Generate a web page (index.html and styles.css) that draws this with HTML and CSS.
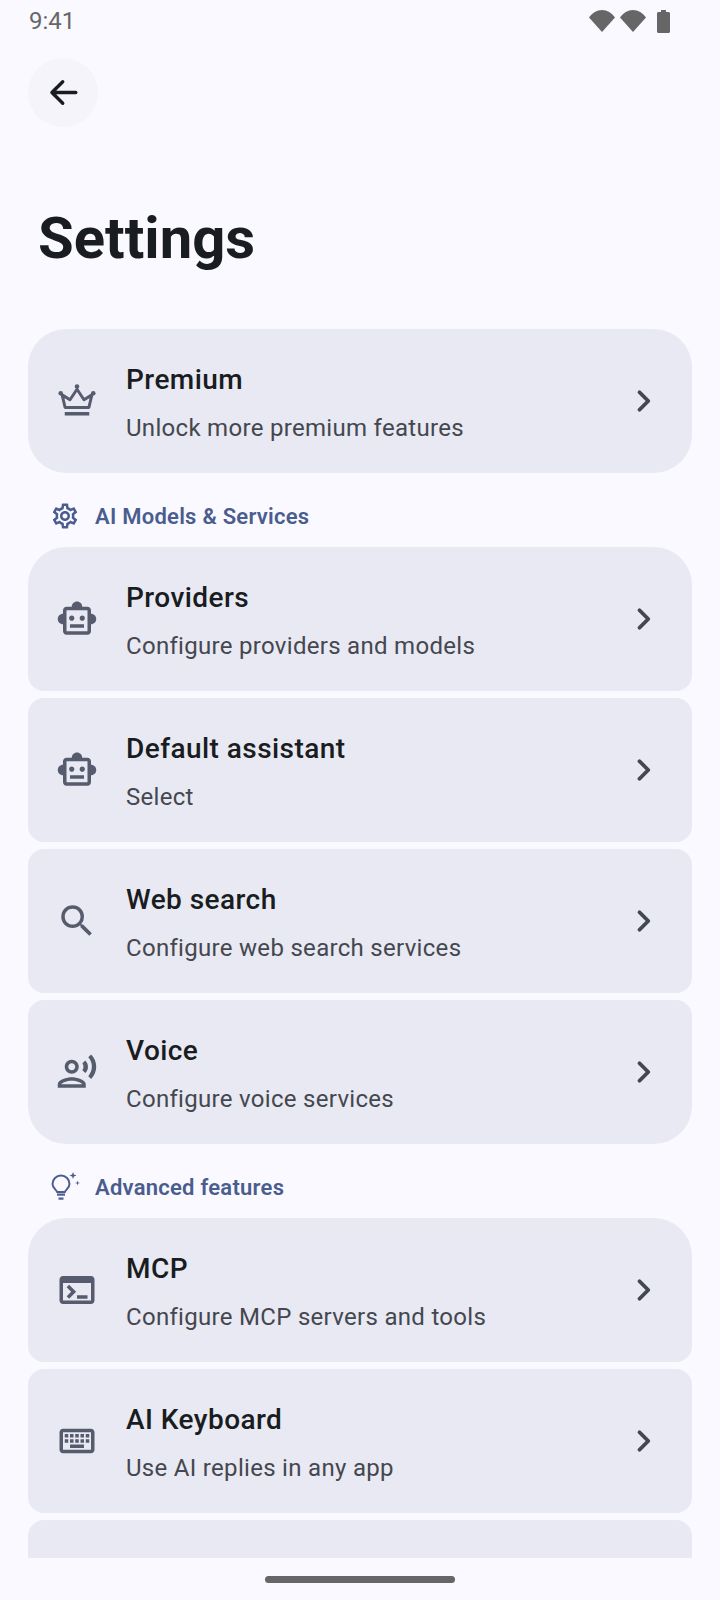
FILE: index.html
```html
<!DOCTYPE html>
<html lang="en">
<head>
<meta charset="utf-8">
<title>Settings</title>
<link rel="stylesheet" href="styles.css">
</head>
<body>
<div class="app">
  <div class="status">
    <span class="time">9:41</span>
    <div class="status-icons">
      <svg class="wifi" viewBox="0 0 26 22"><path d="M0 7.5C3 3 8 0 13 0s10 3 13 7.5L13 22z"/></svg>
      <svg class="wifi" viewBox="0 0 26 22"><path d="M0 7.5C3 3 8 0 13 0s10 3 13 7.5L13 22z"/></svg>
      <svg class="battery" viewBox="0 0 13 23"><path d="M4 0h5v2h2.500c.8 0 1.500.7 1.500 1.500V21.500c0 .8-.7 1.500-1.500 1.500h-10C.7 23 0 22.300 0 21.500V3.500C0 2.700.7 2 1.500 2H4z"/></svg>
    </div>
  </div>
  <div class="topbar">
    <button class="back" aria-label="Back">
      <svg viewBox="0 0 24 24"><path d="M20 12H5M11.500 5 4.500 12l7 7"/></svg>
    </button>
  </div>
  <h1 class="title">Settings</h1>
  <main class="list">
    <a class="card solo">
      <svg class="icon" viewBox="0 0 24 24"><path class="line" d="M5.200 15.700 3.500 8.500 8 11.300 12 5.300l4 6 4.500-2.800-1.700 7.200z"/><circle cx="2.700" cy="7.600" r="1.300"/><circle cx="12" cy="3.700" r="1.300"/><circle cx="21.300" cy="7.600" r="1.300"/><rect x="5" y="18.300" width="14" height="2"/></svg>
      <div class="text"><div class="name">Premium</div><div class="desc">Unlock more premium features</div></div>
      <svg class="chev" viewBox="0 0 24 24"><path d="m10 7 5 5-5 5"/></svg>
    </a>

    <div class="section">
      <svg class="sec-icon" viewBox="0 0 24 24"><path d="M19.430 12.980c.04-.32.07-.64.07-.98 0-.34-.03-.66-.07-.98l2.110-1.650c.19-.15.24-.42.12-.64l-2-3.460c-.09-.16-.26-.25-.44-.25-.06 0-.12.01-.17.03l-2.490 1c-.52-.4-1.080-.73-1.690-.98l-.38-2.650C14.460 2.180 14.250 2 14 2h-4c-.25 0-.46.18-.49.42l-.38 2.650c-.61.25-1.170.59-1.690.98l-2.490-1c-.06-.02-.12-.03-.18-.03-.17 0-.34.09-.43.25l-2 3.460c-.13.22-.07.49.12.64l2.110 1.650c-.04.32-.07.65-.07.98 0 .33.03.66.07.98l-2.110 1.650c-.19.15-.24.42-.12.64l2 3.460c.09.16.26.25.44.25.06 0 .12-.01.17-.03l2.490-1c.52.4 1.080.73 1.690.98l.38 2.650c.03.24.24.42.49.42h4c.25 0 .46-.18.49-.42l.38-2.650c.61-.25 1.170-.59 1.690-.98l2.490 1c.06.02.12.03.18.03.17 0 .34-.09.43-.25l2-3.460c.12-.22.07-.49-.12-.64l-2.110-1.650zm-1.980-1.710c.04.31.05.52.05.73 0 .21-.02.43-.05.73l-.14 1.130.89.7 1.080.84-.7 1.210-1.270-.51-1.040-.42-.9.68c-.43.32-.84.56-1.250.73l-1.060.43-.16 1.130-.2 1.350h-1.400l-.19-1.350-.16-1.130-1.060-.43c-.43-.18-.83-.41-1.230-.71l-.91-.7-1.060.43-1.270.51-.7-1.210 1.080-.84.89-.7-.14-1.130c-.03-.31-.05-.54-.05-.74s.02-.43.05-.73l.14-1.130-.89-.7-1.080-.84.7-1.210 1.270.51 1.040.42.9-.68c.43-.32.84-.56 1.250-.73l1.060-.43.16-1.130.2-1.350h1.390l.19 1.350.16 1.130 1.060.43c.43.18.83.41 1.230.71l.91.7 1.060-.43 1.270-.51.7 1.210-1.070.85-.89.7.14 1.130zM12 8c-2.210 0-4 1.790-4 4s1.790 4 4 4 4-1.790 4-4-1.790-4-4-4zm0 6c-1.100 0-2-.9-2-2s.9-2 2-2 2 .9 2 2-.9 2-2 2z"/></svg>
      <span>AI Models &amp; Services</span>
    </div>
    <div class="group">
      <a class="card first">
        <svg class="icon" viewBox="0 0 24 24"><path d="M20 9V7c0-1.100-.9-2-2-2h-3c0-1.660-1.340-3-3-3S9 3.340 9 5H6c-1.100 0-2 .9-2 2v2c-1.660 0-3 1.340-3 3s1.340 3 3 3v4c0 1.100.9 2 2 2h12c1.100 0 2-.9 2-2v-4c1.660 0 3-1.340 3-3s-1.340-3-3-3zm-2 10H6V7h12v12zm-9-6c-.83 0-1.500-.67-1.500-1.500S8.170 10 9 10s1.500.67 1.500 1.500S9.830 13 9 13zm7.500-1.500c0 .83-.67 1.500-1.500 1.500s-1.500-.67-1.500-1.500.67-1.500 1.500-1.500 1.500.67 1.500 1.500zM8 15h8v2H8v-2z"/></svg>
        <div class="text"><div class="name">Providers</div><div class="desc">Configure providers and models</div></div>
        <svg class="chev" viewBox="0 0 24 24"><path d="m10 7 5 5-5 5"/></svg>
      </a>
      <a class="card">
        <svg class="icon" viewBox="0 0 24 24"><path d="M20 9V7c0-1.100-.9-2-2-2h-3c0-1.660-1.340-3-3-3S9 3.340 9 5H6c-1.100 0-2 .9-2 2v2c-1.660 0-3 1.340-3 3s1.340 3 3 3v4c0 1.100.9 2 2 2h12c1.100 0 2-.9 2-2v-4c1.660 0 3-1.340 3-3s-1.340-3-3-3zm-2 10H6V7h12v12zm-9-6c-.83 0-1.500-.67-1.500-1.500S8.170 10 9 10s1.500.67 1.500 1.500S9.830 13 9 13zm7.500-1.500c0 .83-.67 1.500-1.500 1.500s-1.500-.67-1.500-1.500.67-1.500 1.500-1.500 1.500.67 1.500 1.500zM8 15h8v2H8v-2z"/></svg>
        <div class="text"><div class="name">Default assistant</div><div class="desc">Select</div></div>
        <svg class="chev" viewBox="0 0 24 24"><path d="m10 7 5 5-5 5"/></svg>
      </a>
      <a class="card">
        <svg class="icon" viewBox="0 0 24 24"><path d="M15.500 14h-.79l-.28-.27A6.471 6.471 0 0 0 16 9.500 6.500 6.500 0 1 0 9.500 16c1.610 0 3.090-.59 4.230-1.570l.27.28v.79l5 4.990L20.490 19l-4.990-5zm-6 0C7.010 14 5 11.990 5 9.500S7.010 5 9.500 5 14 7.010 14 9.500 11.990 14 9.500 14z"/></svg>
        <div class="text"><div class="name">Web search</div><div class="desc">Configure web search services</div></div>
        <svg class="chev" viewBox="0 0 24 24"><path d="m10 7 5 5-5 5"/></svg>
      </a>
      <a class="card last">
        <svg class="icon" viewBox="0 0 24 24"><path d="M9 13c2.210 0 4-1.790 4-4s-1.790-4-4-4-4 1.790-4 4 1.790 4 4 4zm0-6c1.100 0 2 .9 2 2s-.9 2-2 2-2-.9-2-2 .9-2 2-2zm0 8c-2.670 0-8 1.340-8 4v2h16v-2c0-2.660-5.330-4-8-4zm-6 4c.22-.72 3.310-2 6-2 2.700 0 5.800 1.290 6 2H3zM15.080 7.050c.84 1.180.84 2.710 0 3.890l1.680 1.690c2.020-2.020 2.020-5.070 0-7.270l-1.680 1.690zM20.070 2l-1.630 1.630c2.770 3.020 2.770 7.560 0 10.740L20.070 16c3.900-3.890 3.910-9.950 0-14z"/></svg>
        <div class="text"><div class="name">Voice</div><div class="desc">Configure voice services</div></div>
        <svg class="chev" viewBox="0 0 24 24"><path d="m10 7 5 5-5 5"/></svg>
      </a>
    </div>

    <div class="section">
      <svg class="sec-icon" viewBox="0 0 30 30"><path class="line" d="M7 20c0-2-4.500-3.500-4.500-8a8.500 8.500 0 0 1 17 0c0 4.500-4.500 6-4.500 8z"/><rect x="7" y="21.500" width="8" height="2.200"/><rect x="8.500" y="25.500" width="5" height="2.200"/><path d="m23 0 .9 2.600 2.600.9-2.600.9-.9 2.600-.9-2.600-2.600-.9 2.600-.9zM27.500 8.500l.6 1.900 1.900.6-1.900.6-.6 1.900-.6-1.900-1.900-.6 1.900-.6z"/></svg>
      <span>Advanced features</span>
    </div>
    <div class="group">
      <a class="card first">
        <svg class="icon" viewBox="0 0 24 24"><path d="M20 4H4c-1.100 0-2 .9-2 2v12c0 1.100.9 2 2 2h16c1.100 0 2-.9 2-2V6c0-1.100-.9-2-2-2zm0 14H4V8h16v10zm-2-1h-6v-2h6v2zM7.500 17l-1.410-1.410L8.670 13l-2.590-2.590L7.500 9l4 4-4 4z"/></svg>
        <div class="text"><div class="name">MCP</div><div class="desc">Configure MCP servers and tools</div></div>
        <svg class="chev" viewBox="0 0 24 24"><path d="m10 7 5 5-5 5"/></svg>
      </a>
      <a class="card">
        <svg class="icon" viewBox="0 0 24 24"><path d="M20 7v10H4V7h16m0-2H4c-1.100 0-1.990.9-1.990 2L2 17c0 1.100.9 2 2 2h16c1.100 0 2-.9 2-2V7c0-1.100-.9-2-2-2zm-9 3h2v2h-2zm0 3h2v2h-2zM8 8h2v2H8zm0 3h2v2H8zm-3 0h2v2H5zm0-3h2v2H5zm3 6h8v2H8zm6-3h2v2h-2zm0-3h2v2h-2zm3 3h2v2h-2zm0-3h2v2h-2z"/></svg>
        <div class="text"><div class="name">AI Keyboard</div><div class="desc">Use AI replies in any app</div></div>
        <svg class="chev" viewBox="0 0 24 24"><path d="m10 7 5 5-5 5"/></svg>
      </a>
      <div class="card"></div>
    </div>
  </main>
  <div class="navbar"><div class="home"></div></div>
</div>
</body>
</html>
```

FILE: styles.css
```css
* { box-sizing: border-box; }
html, body { margin: 0; padding: 0; }
body { background: #f9f9ff; font-family: Roboto, "Noto Sans", sans-serif; color: #191c20; }
.app { width: 720px; height: 1600px; display: flex; flex-direction: column; overflow: hidden; }

.status { height: 42px; padding: 0 50px 0 29px; display: flex; justify-content: space-between; align-items: center; color: #666; }
.time { font-size: 24px; line-height: 42px; }
.status-icons { display: flex; align-items: flex-start; gap: 5px; }
.wifi { width: 26px; height: 22px; fill: #666; display: block; }
.battery { width: 13px; height: 23px; fill: #666; display: block; margin-left: 6px; }

.topbar { padding: 16px 28px 0; }
.back { width: 70px; height: 69px; border: 0; padding: 0; border-radius: 50%; background: #f4f4fa; display: flex; align-items: center; justify-content: center; }
.back svg { width: 37px; height: 37px; fill: none; stroke: #191c20; stroke-width: 2.2; stroke-linecap: round; stroke-linejoin: round; }

.title { margin: 0; padding: 78px 38px 0; height: 202px; font-size: 58px; line-height: 66px; font-weight: 700; color: #191c20; }

.list { flex: 1; min-height: 0; overflow: hidden; padding: 0 28px; }
.group { display: flex; flex-direction: column; gap: 7px; }
.card { height: 144px; flex: none; display: flex; align-items: center; padding: 0 28px; gap: 28px; background: #e8e9f2; border-radius: 16px; }
.card.solo { border-radius: 38px; }
.card.first { border-radius: 38px 38px 16px 16px; }
.card.last { border-radius: 16px 16px 38px 38px; }
.icon { width: 42px; height: 42px; flex: none; fill: #565b6e; }
.icon .line { fill: none; stroke: #565b6e; stroke-width: 1.7; stroke-linejoin: round; }
.text { flex: 1; min-width: 0; display: flex; flex-direction: column; gap: 11px; padding-top: 4px; }
.name { font-size: 28px; line-height: 38px; font-weight: 500; letter-spacing: .44px; color: #191c20; }
.desc { font-size: 24px; line-height: 36px; letter-spacing: .3px; color: #44474f; }
.chev { width: 42px; height: 42px; flex: none; fill: none; stroke: #44474f; stroke-width: 2.2; stroke-linecap: round; stroke-linejoin: round; }

.section { height: 74px; display: flex; align-items: center; gap: 15px; padding: 12px 0 0 22px; font-size: 22px; font-weight: 600; letter-spacing: .25px; color: #4a5d8e; }
.sec-icon { width: 30px; height: 30px; flex: none; fill: #4a5d8e; }
.sec-icon .line { fill: none; stroke: #4a5d8e; stroke-width: 2; stroke-linejoin: round; }

.navbar { height: 42px; flex: none; display: flex; justify-content: center; padding-top: 18px; }
.home { width: 190px; height: 7px; border-radius: 4px; background: #666; }
```
